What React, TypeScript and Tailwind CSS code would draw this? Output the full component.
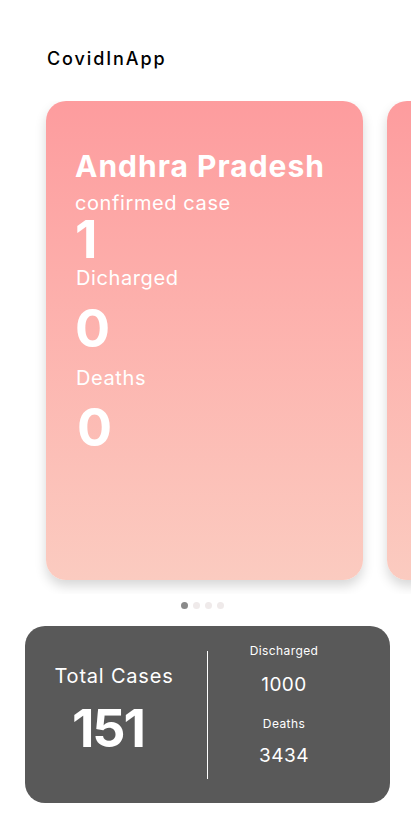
const cards = [
  { state: "Andhra Pradesh", confirmed: 1, discharged: 0, deaths: 0 },
  { state: "Arunachal Pradesh", confirmed: 0, discharged: 0, deaths: 0 },
];

type Card = (typeof cards)[number];

function StateCard({ card, peek }: { card: Card; peek?: boolean }) {
  return (
    <div className="shrink-0 w-[317px] h-[479px] rounded-[20px] bg-gradient-to-b from-[#fd9c9e] to-[#fbcbc0] shadow-[0_6px_12px_rgba(0,0,0,0.16)] pt-[47px] pl-[29px] text-white">
      {!peek && (
        <>
          <h2 className="text-[30px] font-bold leading-[36px] tracking-[1px]">{card.state}</h2>
          <p className="text-[20px] leading-[24px] mt-[7px] tracking-[0.6px]">confirmed case</p>
          <p className="text-[52px] font-bold leading-[50px]">{card.confirmed}</p>
          <p className="text-[20px] leading-[24px] mt-[1px] pl-[1px] tracking-[0.6px]">Dicharged</p>
          <p className="text-[52px] font-bold leading-[50px] mt-[14px]">{card.discharged}</p>
          <p className="text-[20px] leading-[24px] mt-[12px] pl-[1px] tracking-[0.6px]">Deaths</p>
          <p className="text-[52px] font-bold leading-[50px] mt-[13px] pl-[2px]">{card.deaths}</p>
        </>
      )}
    </div>
  );
}

export default function App() {
  return (
    <div className="w-[411px] h-[823px] bg-white overflow-hidden font-['Inter',sans-serif]">
      {/* Header */}
      <h1 className="pt-[47px] pl-[47px] text-[18px] leading-[24px] font-medium tracking-[1.9px] text-black">CovidInApp</h1>

      {/* Carousel */}
      <div className="flex gap-[24px] pl-[46px] mt-[30px] pb-[14px] overflow-hidden">
        <StateCard card={cards[0]} />
        <StateCard card={cards[1]} peek />
      </div>

      {/* Dots */}
      <div className="flex justify-center gap-[5px] mt-[8px] pr-[7px]">
        <span className="w-[7px] h-[7px] rounded-full bg-[#8a8a8a]" />
        <span className="w-[7px] h-[7px] rounded-full bg-[#efeaea]" />
        <span className="w-[7px] h-[7px] rounded-full bg-[#efeaea]" />
        <span className="w-[7px] h-[7px] rounded-full bg-[#efeaea]" />
      </div>

      {/* Totals */}
      <div className="mx-[25px] mt-[17px] w-[365px] h-[177px] rounded-[20px] bg-[#595959] flex text-white">
        <div className="w-[182px] flex flex-col items-center pt-[38px] pr-[4px]">
          <p className="text-[20px] leading-[24px] tracking-[0.8px]">Total Cases</p>
          <p className="text-[52px] font-bold leading-[50px] mt-[16px] tracking-[-2px] pr-[12px]">151</p>
        </div>
        <div className="w-px bg-white mt-[25px] h-[128px]" />
        <div className="flex-1 flex flex-col items-center pt-[17px] pr-[30px]">
          <p className="text-[12px] leading-[16px] tracking-[0.4px]">Discharged</p>
          <p className="text-[19px] leading-[22px] mt-[15px] tracking-[0.5px]">1000</p>
          <p className="text-[12px] leading-[16px] mt-[20px] tracking-[0.4px]">Deaths</p>
          <p className="text-[19px] leading-[22px] mt-[13px] tracking-[0.5px]">3434</p>
        </div>
      </div>
    </div>
  );
}
